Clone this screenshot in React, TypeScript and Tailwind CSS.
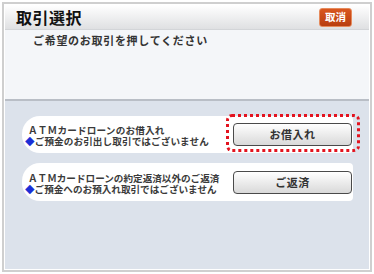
export default function App() {
    return (
        <div className="w-[374px] h-[274px] bg-white p-[2px] font-['Noto_Sans_CJK_JP',sans-serif]">
            <div className="h-full border-2 border-[#cfcfcf] bg-white p-px">
                <div className="h-full flex flex-col">
                    {/* Header */}
                    <div className="h-[25px] flex items-center justify-between pl-[11px] pr-[17px] bg-gradient-to-b from-white to-[#dfe0e2] border-b border-[#d3d5d8]">
                        <h1 className="text-[16px] leading-none font-bold text-[#111] tracking-[0.5px]">取引選択</h1>
                        <button className="w-[33px] h-[19px] rounded-[3px] bg-gradient-to-b from-[#d9571f] to-[#b83d0f] border border-[#e58a5c] text-white text-[10.5px] font-bold leading-none flex items-center justify-center">
                            取消
                        </button>
                    </div>

                    {/* Guidance */}
                    <div className="h-[69px] bg-[#f4f6f9] pl-[28px] pt-[4px]">
                        <p className="text-[11px] leading-[13px] font-bold text-[#333] tracking-[0.7px]">
                            ご希望のお取引を押してください
                        </p>
                    </div>

                    {/* Transaction list */}
                    <div className="flex-1 bg-[#dce2eb] border-t-2 border-[#b9bec6] pt-[15px] pl-[17px] pr-[16px] flex flex-col gap-[10px]">
                        <div className="h-[37px] bg-white rounded-l-[18px] rounded-r-[4px] flex items-center justify-between pl-[3px] pr-[1px]">
                            <div className="pt-[3px] text-[9.6px] leading-[11px] font-bold text-[#3a3a3a]">
                                <p className="pl-[3px] tracking-[0.2px]">ＡＴＭカードローンのお借入れ</p>
                                <p className="tracking-[0.1px]"><span className="text-[#1b2fd6]">◆</span>ご預金のお引出し取引ではございません</p>
                            </div>
                            <div className="relative">
                                <span className="absolute -left-[7px] -right-[8px] -top-[9px] -bottom-[6px] border-[3px] border-dotted border-[#e3131f] rounded-[6px]" />
                                <button className="relative w-[119px] h-[23px] rounded-[4px] border-[1.5px] border-[#4a4a4a] bg-gradient-to-b from-white to-[#d9d9d9] text-[11px] font-bold text-[#333] leading-none flex items-center justify-center tracking-[0.5px]">
                                    お借入れ
                                </button>
                            </div>
                        </div>

                        <div className="h-[38px] bg-white rounded-l-[18px] rounded-r-[4px] flex items-center justify-between pl-[3px] pr-[1px]">
                            <div className="pt-[3px] text-[9.6px] leading-[11px] font-bold text-[#3a3a3a]">
                                <p className="pl-[3px]">ＡＴＭカードローンの約定返済以外のご返済</p>
                                <p><span className="text-[#1b2fd6]">◆</span>ご預金へのお預入れ取引ではございません</p>
                            </div>
                            <button className="w-[119px] h-[23px] rounded-[4px] border-[1.5px] border-[#4a4a4a] bg-gradient-to-b from-white to-[#d9d9d9] text-[11px] font-bold text-[#333] leading-none flex items-center justify-center tracking-[0.5px]">
                                ご返済
                            </button>
                        </div>
                    </div>
                </div>
            </div>
        </div>
    );
}
